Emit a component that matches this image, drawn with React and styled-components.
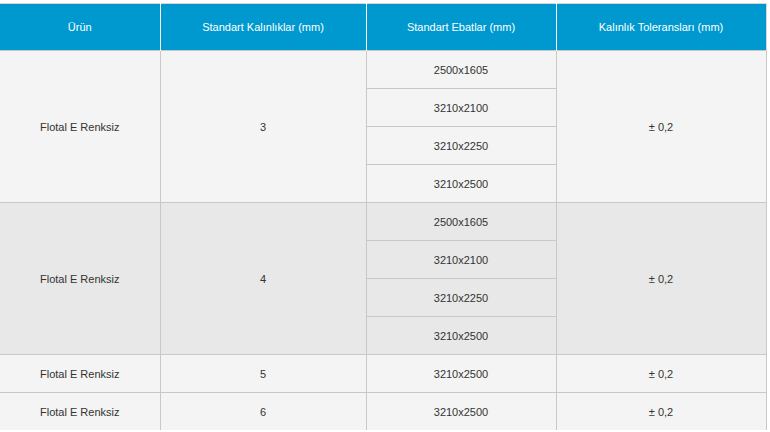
import React from 'react'
import styled, { createGlobalStyle } from 'styled-components'

const groups = [
    { product: 'Flotal E Renksiz', thickness: '3', sizes: ['2500x1605', '3210x2100', '3210x2250', '3210x2500'], tolerance: '± 0,2', dark: false },
    { product: 'Flotal E Renksiz', thickness: '4', sizes: ['2500x1605', '3210x2100', '3210x2250', '3210x2500'], tolerance: '± 0,2', dark: true },
    { product: 'Flotal E Renksiz', thickness: '5', sizes: ['3210x2500'], tolerance: '± 0,2', dark: false },
    { product: 'Flotal E Renksiz', thickness: '6', sizes: ['3210x2500'], tolerance: '± 0,2', dark: false },
]

const App = () => {
    return (
        <>
            <GlobalStyle />
            <Page>
                <Table>
                    <colgroup>
                        <col style={{ width: 160 }} />
                        <col style={{ width: 206 }} />
                        <col style={{ width: 190 }} />
                        <col style={{ width: 210 }} />
                    </colgroup>
                    <thead>
                        <tr>
                            <HeadCell $first>Ürün</HeadCell>
                            <HeadCell>Standart Kalınlıklar (mm)</HeadCell>
                            <HeadCell>Standart Ebatlar (mm)</HeadCell>
                            <HeadCell $last>Kalınlık Toleransları (mm)</HeadCell>
                        </tr>
                    </thead>
                    <tbody>
                        {groups.map((g, gi) =>
                            g.sizes.map((size, si) => (
                                <Row key={gi + '-' + si} $dark={g.dark}>
                                    {si === 0 && <Cell rowSpan={g.sizes.length} $first>{g.product}</Cell>}
                                    {si === 0 && <Cell rowSpan={g.sizes.length}>{g.thickness}</Cell>}
                                    <Cell>{size}</Cell>
                                    {si === 0 && <Cell rowSpan={g.sizes.length} $last>{g.tolerance}</Cell>}
                                </Row>
                            ))
                        )}
                    </tbody>
                </Table>
            </Page>
        </>
    )
}

const GlobalStyle = createGlobalStyle`
    body {
        margin: 0;
        background: #ffffff;
        font-family: "Liberation Sans", Arial, sans-serif;
    }
`;

const Page = styled.div`
    padding-top: 3px;
`;

const Table = styled.table`
    width: 766px;
    table-layout: fixed;
    border-collapse: collapse;
    border-top: 1px solid #d6d6d6;
    font-size: 11px;
`;

const HeadCell = styled.th`
    height: 46px;
    padding: 0;
    background: #0099cf;
    color: #ffffff;
    font-weight: normal;
    text-align: center;
    vertical-align: middle;
    border-left: ${p => (p.$first ? 'none' : '1px solid #ffffff')};
    border-right: ${p => (p.$last ? '1px solid #d6d6d6' : 'none')};
`;

const Row = styled.tr`
    background: ${p => (p.$dark ? '#e8e8e8' : '#f4f4f4')};
`;

const Cell = styled.td`
    height: 37px;
    padding: 0;
    color: #333333;
    text-align: center;
    vertical-align: middle;
    border-top: 1px solid #c8c8c8;
    border-left: ${p => (p.$first ? 'none' : '1px solid #c8c8c8')};
    border-right: ${p => (p.$last ? '1px solid #c8c8c8' : 'none')};
`;

export default App
